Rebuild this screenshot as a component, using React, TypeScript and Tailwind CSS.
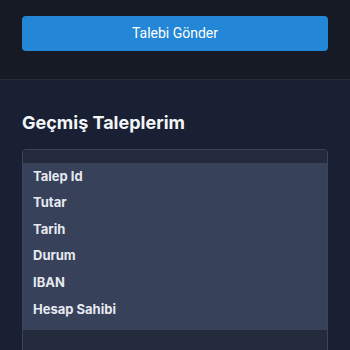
export default function App() {
  const fields = ["Talep Id", "Tutar", "Tarih", "Durum", "IBAN", "Hesap Sahibi"];

  return (
    <div className="w-[350px] h-[350px] overflow-hidden bg-[#1a2033] font-['Inter',sans-serif]">
      <div className="bg-[#161a25] px-[22px] pt-[16px] h-[80px] border-b border-[#252c3e]">
        <button className="w-full h-[35px] rounded-[4px] bg-[#2386d6] text-white text-[14px] font-['Roboto',sans-serif]">
          Talebi Gönder
        </button>
      </div>

      <div className="px-[22px] pt-[31px]">
        <h2 className="text-[18px] leading-[24px] font-bold text-[#f3f5f8]">Geçmiş Taleplerim</h2>

        <div className="mt-[14px] rounded-[4px] border border-[#3b4458] overflow-hidden">
          <div className="h-[13px] bg-[#232a3c]" />
          <div className="bg-[#374159] pb-[7px]">
            {fields.map((f) => (
              <div key={f} className="h-[26.6px] flex items-center px-[10px] text-[13px] font-bold text-[#e6e9f0]">
                {f}
              </div>
            ))}
          </div>
          <div className="h-[40px] bg-[#232a3c]" />
        </div>
      </div>
    </div>
  );
}
